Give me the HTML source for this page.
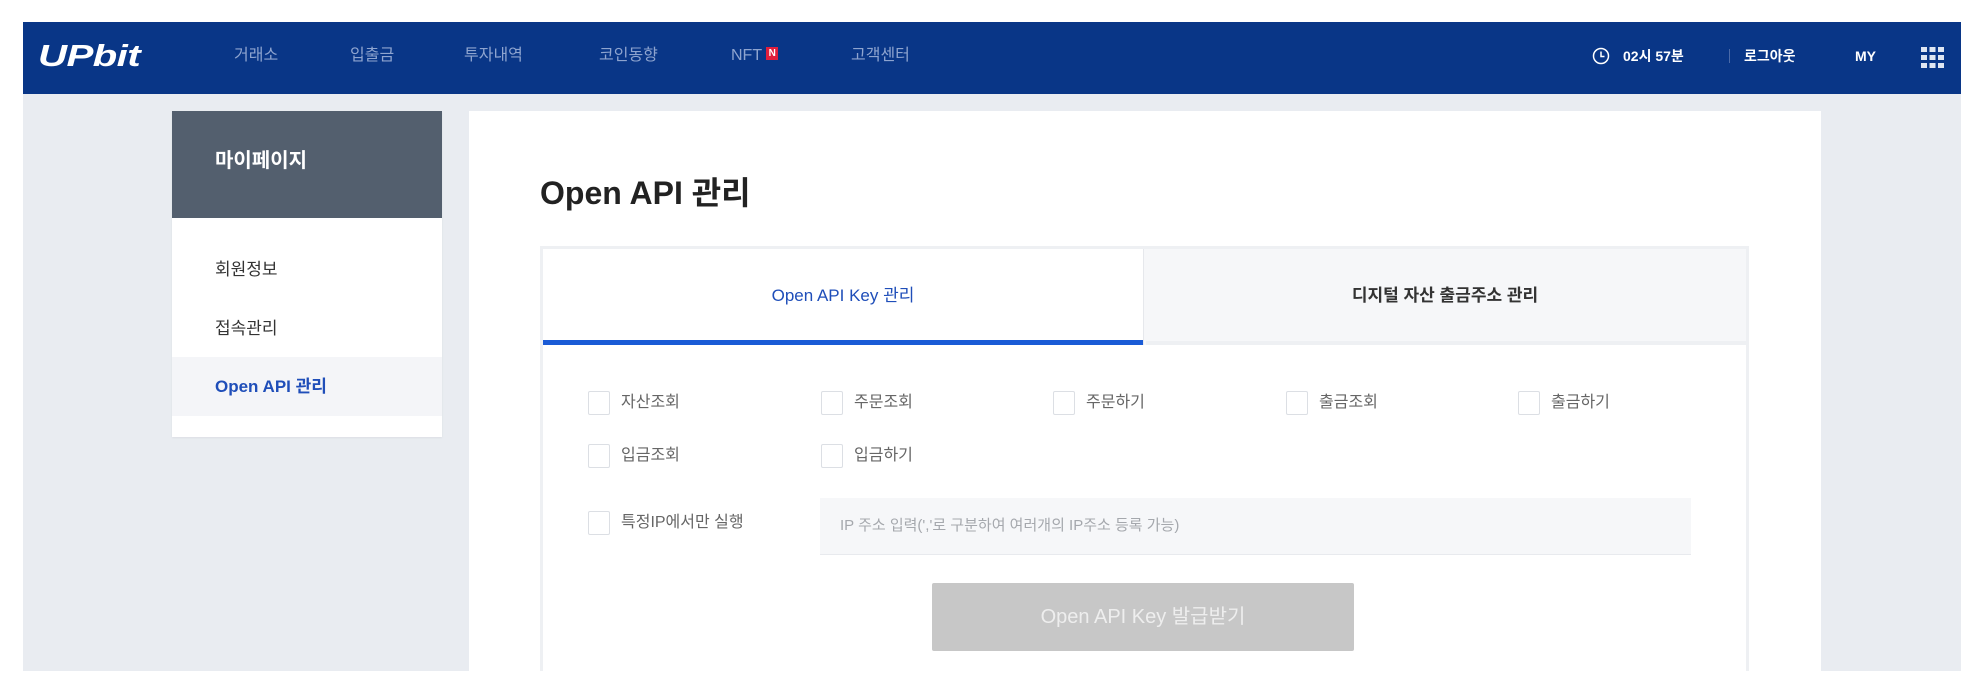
<!DOCTYPE html>
<html><head><meta charset="utf-8"><style>
*{margin:0;padding:0;box-sizing:border-box}
body{width:1987px;height:696px;background:#fff;position:relative;overflow:hidden;font-family:"Liberation Sans","Noto Sans CJK KR",sans-serif}
.a{position:absolute;white-space:nowrap}
#hdr{left:23px;top:22px;width:1938px;height:72px;background:#093687}
#bg{left:23px;top:94px;width:1938px;height:577px;background:#e9ecf1}
.nav{top:44px;font-size:16px;color:#8ea4cf;line-height:24px}
.cb{width:22px;height:24px;border:1px solid #dcdfe4;border-radius:2px;background:#fff}
.lb{font-size:16px;color:#666;line-height:24px}
</style></head><body>
<div class="a" id="hdr"></div>
<div class="a" id="bg"></div>
<div class="a" style="left:38px;top:39px;font-size:31px;font-weight:900;font-style:italic;color:#fff;line-height:34px;transform:scaleX(1.3);transform-origin:left center;letter-spacing:-0.5px">UPbit</div>
<div class="a nav" style="left:234px">거래소</div>
<div class="a nav" style="left:350px">입출금</div>
<div class="a nav" style="left:464px">투자내역</div>
<div class="a nav" style="left:599px">코인동향</div>
<div class="a nav" style="left:731px">NFT <span style="display:inline-block;width:12px;height:13px;background:#e01e3c;color:#fff;font-size:10px;font-weight:bold;line-height:13px;text-align:center;vertical-align:4px">N</span></div>
<div class="a nav" style="left:851px">고객센터</div>
<svg class="a" style="left:1592px;top:47px" width="18" height="18" viewBox="0 0 18 18"><circle cx="9" cy="9" r="7.5" fill="none" stroke="#fff" stroke-width="1.5"/><path d="M9 4.5V9.5H12.5" fill="none" stroke="#fff" stroke-width="1.5"/></svg>
<div class="a" style="left:1623px;top:45px;font-size:14px;font-weight:bold;color:#fff;line-height:22px">02시 57분</div>
<div class="a" style="left:1729px;top:49px;width:1px;height:14px;background:#4a6aa8"></div>
<div class="a" style="left:1744px;top:45px;font-size:14px;font-weight:bold;color:#fff;line-height:22px">로그아웃</div>
<div class="a" style="left:1855px;top:45px;font-size:14px;font-weight:bold;color:#fff;line-height:22px">MY</div>
<svg class="a" style="left:1921px;top:47px" width="23" height="21" viewBox="0 0 23 21" fill="#dfe6f2"><rect x="0" y="0" width="6" height="5"/><rect x="8.5" y="0" width="6" height="5"/><rect x="17" y="0" width="6" height="5"/><rect x="0" y="8" width="6" height="5"/><rect x="8.5" y="8" width="6" height="5"/><rect x="17" y="8" width="6" height="5"/><rect x="0" y="16" width="6" height="5"/><rect x="8.5" y="16" width="6" height="5"/><rect x="17" y="16" width="6" height="5"/></svg>

<div class="a" style="left:172px;top:111px;width:270px;height:326px;background:#fff;box-shadow:0 1px 2px rgba(0,0,0,.06)"></div>
<div class="a" style="left:172px;top:111px;width:270px;height:107px;background:#535f6e"></div>
<div class="a" style="left:215px;top:148px;font-size:20px;font-weight:bold;color:#fff;line-height:26px">마이페이지</div>
<div class="a" style="left:215px;top:258px;font-size:17px;color:#333;line-height:24px">회원정보</div>
<div class="a" style="left:215px;top:317px;font-size:17px;color:#333;line-height:24px">접속관리</div>
<div class="a" style="left:172px;top:357px;width:270px;height:59px;background:#f4f5f8"></div>
<div class="a" style="left:215px;top:375px;font-size:17px;font-weight:bold;color:#1f4eb9;line-height:24px">Open API 관리</div>

<div class="a" style="left:469px;top:111px;width:1352px;height:560px;background:#fff"></div>
<div class="a" style="left:540px;top:173px;font-size:32px;font-weight:bold;color:#222;line-height:40px">Open API 관리</div>
<div class="a" style="left:540px;top:246px;width:1209px;height:425px;border:3px solid #eef0f3;border-bottom:none"></div>
<div class="a" style="left:1143px;top:249px;width:603px;height:96px;background:#f6f7f9;border-left:1px solid #e6e8ec"></div>
<div class="a" style="left:543px;top:340px;width:600px;height:5px;background:#1a5bd6"></div>
<div class="a" style="left:1146px;top:341px;width:600px;height:4px;background:#eef0f3"></div>
<div class="a" style="left:543px;top:284px;width:600px;text-align:center;font-size:17px;color:#1f4eb9;line-height:24px">Open API Key 관리</div>
<div class="a" style="left:1144px;top:284px;width:602px;text-align:center;font-size:17px;font-weight:bold;color:#333;line-height:24px">디지털 자산 출금주소 관리</div>

<div class="a cb" style="left:588px;top:391px"></div><div class="a lb" style="left:621px;top:391px">자산조회</div>
<div class="a cb" style="left:821px;top:391px"></div><div class="a lb" style="left:854px;top:391px">주문조회</div>
<div class="a cb" style="left:1053px;top:391px"></div><div class="a lb" style="left:1086px;top:391px">주문하기</div>
<div class="a cb" style="left:1286px;top:391px"></div><div class="a lb" style="left:1319px;top:391px">출금조회</div>
<div class="a cb" style="left:1518px;top:391px"></div><div class="a lb" style="left:1551px;top:391px">출금하기</div>
<div class="a cb" style="left:588px;top:444px"></div><div class="a lb" style="left:621px;top:444px">입금조회</div>
<div class="a cb" style="left:821px;top:444px"></div><div class="a lb" style="left:854px;top:444px">입금하기</div>
<div class="a cb" style="left:588px;top:511px"></div><div class="a lb" style="left:621px;top:511px">특정IP에서만 실행</div>
<div class="a" style="left:820px;top:498px;width:871px;height:57px;background:#f6f7f9;border-bottom:1px solid #e8eaee"></div>
<div class="a" style="left:840px;top:514px;font-size:15px;color:#a5a8ad;line-height:24px">IP 주소 입력(','로 구분하여 여러개의 IP주소 등록 가능)</div>
<div class="a" style="left:932px;top:583px;width:422px;height:68px;background:#c7c7c7;border-radius:2px;text-align:center;line-height:68px;font-size:20px;color:#eee">Open API Key 발급받기</div>
</body></html>
